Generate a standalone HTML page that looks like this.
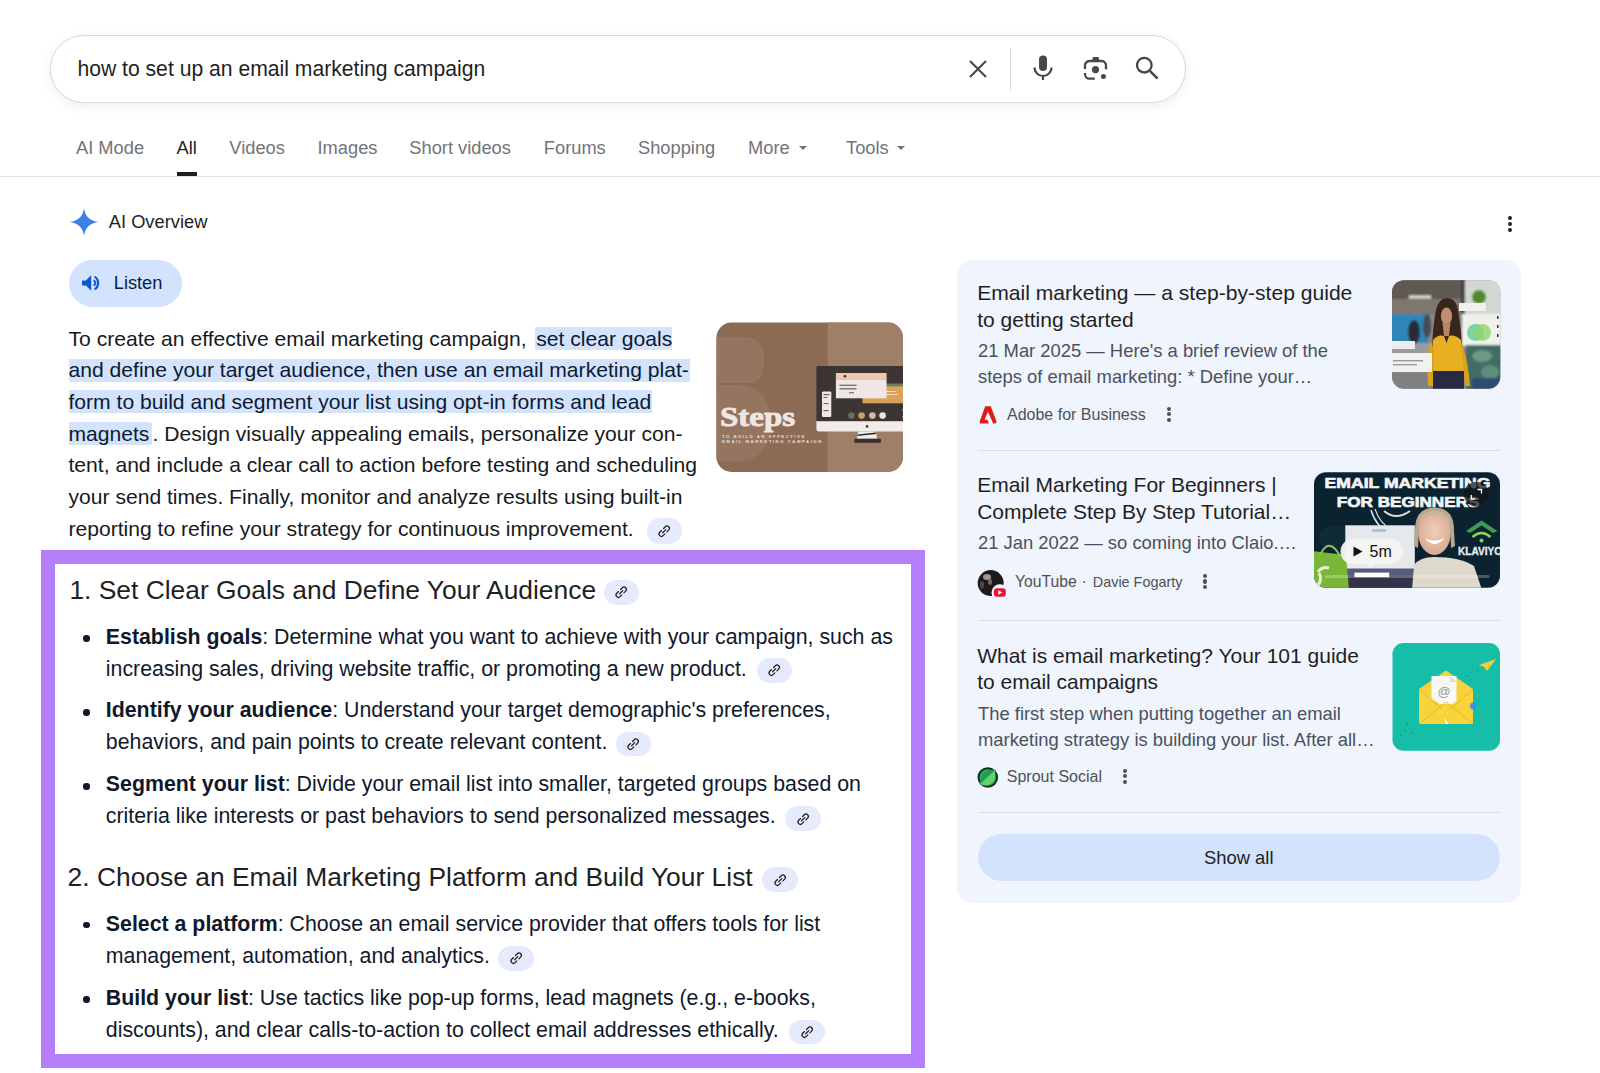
<!DOCTYPE html>
<html><head><meta charset="utf-8"><title>Search</title>
<style>
html,body{margin:0;padding:0;background:#fff;width:1600px;height:1073px;overflow:hidden;position:relative}
body{font-family:"Liberation Sans",sans-serif}
.t{position:absolute;white-space:nowrap;line-height:1;font-family:"Liberation Sans",sans-serif}
.t b{font-weight:700}
</style></head><body>
<div style="position:absolute;left:50px;top:35px;width:1136px;height:68px;box-sizing:border-box;border:1px solid #d9d9d9;border-radius:34px;background:#fff;box-shadow:0 3px 12px rgba(0,0,0,.075)"></div><svg style="position:absolute;left:966px;top:57px" width="24" height="24" viewBox="0 0 24 24"><path d="M4 4L20 20M20 4L4 20" stroke="#474747" stroke-width="2.1" fill="none"/></svg><div style="position:absolute;left:1009.5px;top:48px;width:1px;height:42px;background:#dadce0"></div><svg style="position:absolute;left:1030px;top:54px" width="26" height="28" viewBox="0 0 26 28"><rect x="9" y="1.5" width="8" height="15.5" rx="4" fill="#474747"/><path d="M4.5 13.5a8.5 8.5 0 0 0 17 0" stroke="#474747" stroke-width="2.2" fill="none"/><path d="M13 22v4" stroke="#474747" stroke-width="2.2"/></svg><svg style="position:absolute;left:1080px;top:54px" width="30" height="30" viewBox="0 0 30 30"><path d="M5 15V11.5A4.5 4.5 0 0 1 9.5 7H21.5A4.5 4.5 0 0 1 26 11.5V15.3" stroke="#474747" stroke-width="2.3" fill="none"/><path d="M5 19V20.2A4.5 4.5 0 0 0 9.5 24.7H14.8" stroke="#474747" stroke-width="2.3" fill="none"/><rect x="12.5" y="2.9" width="6.4" height="4.5" rx="1" fill="#474747"/><circle cx="15.5" cy="15.6" r="3.6" fill="#474747"/><circle cx="23.4" cy="22.5" r="2.5" fill="#474747"/></svg><svg style="position:absolute;left:1132px;top:53px" width="30" height="30" viewBox="0 0 30 30"><circle cx="12.3" cy="12.2" r="7.3" stroke="#474747" stroke-width="2.3" fill="none"/><path d="M17.8 17.8L25.6 25.6" stroke="#474747" stroke-width="2.5"/></svg><div style="position:absolute;left:799px;top:146px;width:0;height:0;border-left:4.5px solid transparent;border-right:4.5px solid transparent;border-top:4.5px solid #70757a"></div><div style="position:absolute;left:897px;top:146px;width:0;height:0;border-left:4.5px solid transparent;border-right:4.5px solid transparent;border-top:4.5px solid #70757a"></div><div style="position:absolute;left:176.5px;top:172px;width:20.5px;height:3.5px;background:#1f1f1f"></div><div style="position:absolute;left:0;top:175.5px;width:1600px;height:1.2px;background:#e3e3e3"></div><svg style="position:absolute;left:69px;top:207px" width="30" height="30" viewBox="0 0 30 30"><path d="M15 1Q16.5 13.5 29.5 15Q16.5 16.5 15 29Q13.5 16.5 0.5 15Q13.5 13.5 15 1Z" fill="#3f7fe8"/></svg><div style="position:absolute;left:1507.5px;top:215.6px;width:4.2px;height:4.2px;border-radius:50%;background:#1f1f1f"></div><div style="position:absolute;left:1507.5px;top:221.6px;width:4.2px;height:4.2px;border-radius:50%;background:#1f1f1f"></div><div style="position:absolute;left:1507.5px;top:227.5px;width:4.2px;height:4.2px;border-radius:50%;background:#1f1f1f"></div><div style="position:absolute;left:69px;top:260px;width:112.5px;height:46.5px;border-radius:24px;background:#d3e3fd"></div><svg style="position:absolute;left:81px;top:272px" width="22" height="22" viewBox="0 0 22 22"><path d="M1 8.5H4.8L10.2 3.2V18.8L4.8 13.5H1Z" fill="#0b57d0"/><path d="M13.6 4.6a7.6 7.6 0 0 1 0 12.8" stroke="#0b57d0" stroke-width="2.3" fill="none"/><path d="M12.6 8.3a3 3 0 0 1 0 5.4" stroke="#0b57d0" stroke-width="2" fill="none"/></svg><div style="position:absolute;left:534.7px;top:327.1px;width:137.5px;height:23px;background:#d3e3fd;border-radius:2px 0 0 0"></div><div style="position:absolute;left:69px;top:358.75px;width:621.2px;height:23px;background:#d3e3fd;border-radius:0"></div><div style="position:absolute;left:69px;top:390.4px;width:583.3px;height:23px;background:#d3e3fd;border-radius:0"></div><div style="position:absolute;left:69px;top:422.05px;width:82.6px;height:23px;background:#d3e3fd;border-radius:0 2.5px 2.5px 0"></div><div style="position:absolute;left:646.5px;top:518.2px;width:35.7px;height:25.5px;border-radius:12.5px;background:#e5eafc"><svg width="16.4" height="16.4" viewBox="0 0 18 18" style="position:absolute;left:50%;top:50%;margin:-8.2px 0 0 -8.2px"><g transform="rotate(-45 9 9)" stroke="#1f1f1f" stroke-width="1.35" fill="none" stroke-linecap="round"><path d="M7.4 6.4H4.7A2.6 2.6 0 0 0 4.7 11.6H7.4"/><path d="M10.6 6.4H13.3A2.6 2.6 0 0 1 13.3 11.6H10.6"/><path d="M6.6 9H11.4"/></g></svg></div><div style="position:absolute;left:41px;top:550px;width:883.5px;height:517.5px;box-sizing:border-box;border:14.5px solid #b57ffc;background:#fff"></div><div style="position:absolute;left:603.8px;top:580px;width:35.3px;height:24.5px;border-radius:12.5px;background:#e5eafc"><svg width="16.4" height="16.4" viewBox="0 0 18 18" style="position:absolute;left:50%;top:50%;margin:-8.2px 0 0 -8.2px"><g transform="rotate(-45 9 9)" stroke="#1f1f1f" stroke-width="1.35" fill="none" stroke-linecap="round"><path d="M7.4 6.4H4.7A2.6 2.6 0 0 0 4.7 11.6H7.4"/><path d="M10.6 6.4H13.3A2.6 2.6 0 0 1 13.3 11.6H10.6"/><path d="M6.6 9H11.4"/></g></svg></div><div style="position:absolute;left:83.3px;top:635.4000000000001px;width:6.6px;height:6.6px;border-radius:50%;background:#10192b"></div><div style="position:absolute;left:756.9px;top:658px;width:35.3px;height:24.5px;border-radius:12.5px;background:#e5eafc"><svg width="16.4" height="16.4" viewBox="0 0 18 18" style="position:absolute;left:50%;top:50%;margin:-8.2px 0 0 -8.2px"><g transform="rotate(-45 9 9)" stroke="#1f1f1f" stroke-width="1.35" fill="none" stroke-linecap="round"><path d="M7.4 6.4H4.7A2.6 2.6 0 0 0 4.7 11.6H7.4"/><path d="M10.6 6.4H13.3A2.6 2.6 0 0 1 13.3 11.6H10.6"/><path d="M6.6 9H11.4"/></g></svg></div><div style="position:absolute;left:83.3px;top:709.1px;width:6.6px;height:6.6px;border-radius:50%;background:#10192b"></div><div style="position:absolute;left:615.5px;top:731.6px;width:35.5px;height:24.5px;border-radius:12.5px;background:#e5eafc"><svg width="16.4" height="16.4" viewBox="0 0 18 18" style="position:absolute;left:50%;top:50%;margin:-8.2px 0 0 -8.2px"><g transform="rotate(-45 9 9)" stroke="#1f1f1f" stroke-width="1.35" fill="none" stroke-linecap="round"><path d="M7.4 6.4H4.7A2.6 2.6 0 0 0 4.7 11.6H7.4"/><path d="M10.6 6.4H13.3A2.6 2.6 0 0 1 13.3 11.6H10.6"/><path d="M6.6 9H11.4"/></g></svg></div><div style="position:absolute;left:83.3px;top:783.2px;width:6.6px;height:6.6px;border-radius:50%;background:#10192b"></div><div style="position:absolute;left:785.4px;top:806.4px;width:35.8px;height:25px;border-radius:12.5px;background:#e5eafc"><svg width="16.4" height="16.4" viewBox="0 0 18 18" style="position:absolute;left:50%;top:50%;margin:-8.2px 0 0 -8.2px"><g transform="rotate(-45 9 9)" stroke="#1f1f1f" stroke-width="1.35" fill="none" stroke-linecap="round"><path d="M7.4 6.4H4.7A2.6 2.6 0 0 0 4.7 11.6H7.4"/><path d="M10.6 6.4H13.3A2.6 2.6 0 0 1 13.3 11.6H10.6"/><path d="M6.6 9H11.4"/></g></svg></div><div style="position:absolute;left:762.3px;top:867.4px;width:35.4px;height:24.6px;border-radius:12.5px;background:#e5eafc"><svg width="16.4" height="16.4" viewBox="0 0 18 18" style="position:absolute;left:50%;top:50%;margin:-8.2px 0 0 -8.2px"><g transform="rotate(-45 9 9)" stroke="#1f1f1f" stroke-width="1.35" fill="none" stroke-linecap="round"><path d="M7.4 6.4H4.7A2.6 2.6 0 0 0 4.7 11.6H7.4"/><path d="M10.6 6.4H13.3A2.6 2.6 0 0 1 13.3 11.6H10.6"/><path d="M6.6 9H11.4"/></g></svg></div><div style="position:absolute;left:83.3px;top:921.9000000000001px;width:6.6px;height:6.6px;border-radius:50%;background:#10192b"></div><div style="position:absolute;left:497.8px;top:946.3px;width:36px;height:24.5px;border-radius:12.5px;background:#e5eafc"><svg width="16.4" height="16.4" viewBox="0 0 18 18" style="position:absolute;left:50%;top:50%;margin:-8.2px 0 0 -8.2px"><g transform="rotate(-45 9 9)" stroke="#1f1f1f" stroke-width="1.35" fill="none" stroke-linecap="round"><path d="M7.4 6.4H4.7A2.6 2.6 0 0 0 4.7 11.6H7.4"/><path d="M10.6 6.4H13.3A2.6 2.6 0 0 1 13.3 11.6H10.6"/><path d="M6.6 9H11.4"/></g></svg></div><div style="position:absolute;left:83.3px;top:996.4000000000001px;width:6.6px;height:6.6px;border-radius:50%;background:#10192b"></div><div style="position:absolute;left:789.2px;top:1019.7px;width:35.5px;height:24.7px;border-radius:12.5px;background:#e5eafc"><svg width="16.4" height="16.4" viewBox="0 0 18 18" style="position:absolute;left:50%;top:50%;margin:-8.2px 0 0 -8.2px"><g transform="rotate(-45 9 9)" stroke="#1f1f1f" stroke-width="1.35" fill="none" stroke-linecap="round"><path d="M7.4 6.4H4.7A2.6 2.6 0 0 0 4.7 11.6H7.4"/><path d="M10.6 6.4H13.3A2.6 2.6 0 0 1 13.3 11.6H10.6"/><path d="M6.6 9H11.4"/></g></svg></div><div style="position:absolute;left:956.5px;top:260px;width:564.5px;height:642.5px;border-radius:16px;background:#f0f4fc"></div><div style="position:absolute;left:1166.8000000000002px;top:406.5px;width:4.2px;height:4.2px;border-radius:50%;background:#4d5156"></div><div style="position:absolute;left:1166.8000000000002px;top:412.0px;width:4.2px;height:4.2px;border-radius:50%;background:#4d5156"></div><div style="position:absolute;left:1166.8000000000002px;top:417.5px;width:4.2px;height:4.2px;border-radius:50%;background:#4d5156"></div><div style="position:absolute;left:978px;top:449.5px;width:522px;height:1.2px;background:#d9dee8"></div><div style="position:absolute;left:1203.2px;top:573.9px;width:4.2px;height:4.2px;border-radius:50%;background:#4d5156"></div><div style="position:absolute;left:1203.2px;top:579.4px;width:4.2px;height:4.2px;border-radius:50%;background:#4d5156"></div><div style="position:absolute;left:1203.2px;top:584.9px;width:4.2px;height:4.2px;border-radius:50%;background:#4d5156"></div><div style="position:absolute;left:978px;top:620px;width:522px;height:1.2px;background:#d9dee8"></div><div style="position:absolute;left:1122.6000000000001px;top:768.5px;width:4.2px;height:4.2px;border-radius:50%;background:#4d5156"></div><div style="position:absolute;left:1122.6000000000001px;top:774.0500000000001px;width:4.2px;height:4.2px;border-radius:50%;background:#4d5156"></div><div style="position:absolute;left:1122.6000000000001px;top:779.6px;width:4.2px;height:4.2px;border-radius:50%;background:#4d5156"></div><div style="position:absolute;left:978px;top:811.8px;width:522px;height:1.2px;background:#d9dee8"></div><div style="position:absolute;left:977.7px;top:834.3px;width:522.3px;height:47.2px;border-radius:24px;background:#d3e3fd"></div>
<svg style="position:absolute;left:0;top:0" width="1600" height="1073" viewBox="0 0 1600 1073">
<defs>
<clipPath id="cSteps"><rect x="716.5" y="322.5" width="186.5" height="149.5" rx="15"/></clipPath>
<clipPath id="cAdobe"><rect x="1392" y="280.2" width="108.3" height="108.5" rx="12"/></clipPath>
<clipPath id="cYt"><rect x="1314" y="472.2" width="186" height="115.5" rx="12"/></clipPath>
<clipPath id="cSp"><rect x="1392.5" y="643" width="107.5" height="107.8" rx="11"/></clipPath>
<clipPath id="cAv"><circle cx="990.7" cy="583.1" r="13"/></clipPath>
<filter id="blur1" x="-20%" y="-20%" width="140%" height="140%"><feGaussianBlur stdDeviation="1.2"/></filter>
<filter id="blur06"><feGaussianBlur stdDeviation="0.6"/></filter>
<radialGradient id="gFace" cx="50%" cy="45%" r="60%"><stop offset="0" stop-color="#f0cdb8"/><stop offset="1" stop-color="#d6a890"/></radialGradient>
</defs>

<!-- ===== Steps image ===== -->
<g clip-path="url(#cSteps)">
  <rect x="716" y="322" width="188" height="151" fill="#8c6b54"/>
  <rect x="827.7" y="322" width="76" height="151" fill="#a07f68"/>
  <g filter="url(#blur06)">
  <path d="M700 337 H744 Q764 337 764 361 Q764 385 744 385 H700Z" fill="#957460"/>
  <path d="M700 385 H738 Q770 385 770 423 Q770 461 738 461 H700Z" fill="#957460"/>
  <path d="M716 384 H752" stroke="#86654f" stroke-width="2" opacity="0.6"/>
  </g>
  <!-- monitor -->
  <rect x="816.4" y="365.9" width="90" height="55.5" rx="1.5" fill="#3b3534"/>
  <path d="M816.4 421.2 H906 V431.5 H819.5 A3 3 0 0 1 816.4 428.5Z" fill="#f2ece8"/>
  <circle cx="867.1" cy="426.4" r="1.3" fill="#3b3534"/>
  <path d="M858 431.5 H876 L877 438.8 H857Z" fill="#f2ece8"/>
  <path d="M857.5 434.5 L876 432.5 L876 434 L857.5 436Z" fill="#2c2624"/>
  <rect x="854.3" y="438.7" width="26.7" height="4.1" rx="1" fill="#3a302c"/>
  <rect x="822" y="391.5" width="9.3" height="25.6" rx="1" fill="#efe7e3"/>
  <rect x="823.5" y="394" width="6" height="1.2" fill="#6b6360"/><rect x="823.5" y="397" width="4" height="1" fill="#6b6360"/>
  <rect x="823.5" y="403" width="5" height="1" fill="#6b6360"/><rect x="823.5" y="410" width="5" height="1.2" fill="#6b6360"/>
  <rect x="862.5" y="383.5" width="42" height="3.5" fill="#6e7c62"/>
  <rect x="862.5" y="386.4" width="42" height="16.9" fill="#dca25a"/>
  <rect x="886" y="391" width="10" height="1" fill="#f3dcc0"/><rect x="886" y="394" width="12" height="1" fill="#f3dcc0"/>
  <rect x="835.9" y="373" width="50.7" height="6.5" fill="#f0c7ae"/>
  <rect x="835.9" y="379.3" width="50.7" height="19" fill="#efe7e5"/>
  <circle cx="845" cy="376.3" r="1.3" fill="#3b2a24"/>
  <rect x="839.5" y="384.7" width="17" height="1.1" fill="#5b5654"/>
  <rect x="839.5" y="388.3" width="17" height="1.1" fill="#5b5654"/>
  <rect x="849" y="392.3" width="5" height="1" fill="#5b5654"/>
  <circle cx="851.4" cy="415.6" r="3.3" fill="#6b6b5e"/>
  <circle cx="861.6" cy="415.6" r="3.3" fill="#c9a06b"/>
  <circle cx="872.4" cy="415.6" r="3.3" fill="#d8b99b"/>
  <circle cx="882.6" cy="415.6" r="3.3" fill="#efe7e3"/>
  <circle cx="904" cy="410" r="1.5" fill="#ffffff"/><circle cx="904" cy="417" r="1.5" fill="#ffffff"/>
  <!-- Steps text -->
  <text x="720" y="426" font-family="Liberation Serif" font-weight="700" font-size="27.5" fill="#efe6e1" stroke="#efe6e1" stroke-width="0.9" textLength="75" lengthAdjust="spacingAndGlyphs">Steps</text>
  <text x="722" y="438.2" font-family="Liberation Sans" font-weight="700" font-size="4.3" fill="#e9ddd6" letter-spacing="1.5">TO BUILD AN EFFECTIVE</text>
  <text x="722" y="443.2" font-family="Liberation Sans" font-weight="700" font-size="4.3" fill="#e9ddd6" letter-spacing="1.5">EMAIL MARKETING CAMPAIGN</text>
</g>

<!-- ===== Adobe thumbnail ===== -->
<g clip-path="url(#cAdobe)">
  <rect x="1390" y="278" width="112" height="112" fill="#8c8884"/>
  <g filter="url(#blur1)">
  <rect x="1390" y="278" width="75" height="22" fill="#5f5852"/>
  <rect x="1390" y="299" width="75" height="16" fill="#7d7770"/>
  <rect x="1409" y="295.5" width="22" height="3" fill="#e2ddd4"/>
  <rect x="1465" y="278" width="37" height="36" fill="#d3d7d2"/>
  <rect x="1461" y="278" width="4" height="36" fill="#45433f"/>
  <rect x="1390" y="314" width="38" height="30" fill="#2d87b8"/>
  <rect x="1390" y="343" width="45" height="47" fill="#9b9b9c"/>
  <rect x="1390" y="372" width="45" height="18" fill="#7f8083"/>
  <ellipse cx="1414" cy="332" rx="6" ry="12" fill="#2a2c36"/>
  <ellipse cx="1427" cy="326" rx="4" ry="12" fill="#474a55"/>
  <rect x="1462" y="314" width="40" height="32" fill="#eef1ec"/>
  <rect x="1466" y="345" width="36" height="45" fill="#3f6c63"/>
  <ellipse cx="1482" cy="356" rx="10" ry="6" fill="#6d9a86"/>
  <ellipse cx="1490" cy="372" rx="9" ry="7" fill="#5f8e7c"/>
  <rect x="1472" y="378" width="30" height="12" fill="#2e4c73"/>
  <circle cx="1479" cy="297" r="7" fill="#4f8a2a"/>
  </g>
  <g filter="url(#blur06)">
  <circle cx="1475.5" cy="332.5" r="8.5" fill="#6ecf9c" opacity="0.9"/>
  <circle cx="1482.5" cy="332.5" r="8.5" fill="#8ed46a" opacity="0.8"/>
  <rect x="1459" y="303" width="27" height="8" fill="#f0f0ec"/>
  <!-- woman -->
  <path d="M1436 310 Q1439 298 1447 298 Q1456 298 1458 310 Q1461 326 1462 348 L1432 348 Q1433 324 1436 310Z" fill="#37261d"/>
  <ellipse cx="1446.5" cy="316" rx="5.6" ry="8.5" fill="#c18f72"/>
  <path d="M1442.5 323 L1450.5 323 L1449 336 L1444 336Z" fill="#b98468"/>
  <path d="M1433 340 Q1438 334 1444 336 L1446.5 343 L1449 336 Q1455 334 1461 340 L1465 372 L1430 372Z" fill="#e6b022"/>
  <path d="M1430 342 Q1426 358 1428 386 L1433 386 L1434 350Z" fill="#d9a21c"/>
  <path d="M1461 342 Q1468 358 1470 386 L1465 386 L1462 352Z" fill="#d9a21c"/>
  <rect x="1433" y="371" width="31" height="19" fill="#252a44"/>
  <rect x="1390" y="353" width="42" height="19" fill="#f1f1ef"/>
  <rect x="1390" y="341" width="25" height="8" fill="#eeeeec"/>
  <rect x="1393" y="360" width="30" height="1.4" fill="#9a9a9a"/><rect x="1393" y="364" width="24" height="1.4" fill="#9a9a9a"/>
  <rect x="1497" y="316" width="1.5" height="3" fill="#333"/><rect x="1497" y="325" width="1.5" height="3" fill="#333"/><rect x="1497" y="334" width="1.5" height="3" fill="#333"/>
  </g>
</g>

<!-- ===== YouTube thumbnail ===== -->
<g clip-path="url(#cYt)">
  <rect x="1312" y="470" width="190" height="120" fill="#0b2330"/>
  <g filter="url(#blur06)">
  <ellipse cx="1336" cy="538" rx="18" ry="12" fill="#122c36" opacity="0.7"/>
  <path d="M1371 510 Q1376 527 1390 533" stroke="#cfe6ea" stroke-width="1.5" fill="none"/>
  <path d="M1375 509 Q1380 524 1392 530" stroke="#cfe6ea" stroke-width="1.1" fill="none"/>
  <path d="M1384 511 Q1396 521 1410 511" stroke="#e5d3dc" stroke-width="2" fill="none"/>
  <!-- laptop -->
  <rect x="1345.3" y="525.3" width="69.5" height="44" fill="#e6e9ec"/>
  <rect x="1372" y="529" width="14" height="3" fill="#a9c3dc"/>
  <rect x="1338" y="568.5" width="94" height="7" fill="#585b7c"/>
  <rect x="1345" y="575.5" width="88" height="13" fill="#30334a"/>
  <!-- shopify bag -->
  <path d="M1312 551 L1346 555 L1349 590 L1312 590Z" fill="#7ab737"/>
  <path d="M1320 555 Q1329 536 1340 556" stroke="#8cc655" stroke-width="2" fill="none"/>
  <path d="M1318 572 Q1322 566 1329 568 M1319 573 Q1323 580 1317 586" stroke="#e6f0da" stroke-width="3" fill="none"/>
  <!-- man -->
  <path d="M1412 590 L1414 565 Q1420 557 1434 557 Q1460 557 1474 566 L1482 590Z" fill="#ded9cd"/>
  <path d="M1415 532 Q1414 508 1434.5 507.5 Q1455 508 1454 532 L1455 546 L1451 548 L1450 528 L1419 528 L1418 548 L1414 546Z" fill="#b9a78c"/>
  <ellipse cx="1434.5" cy="533" rx="16.2" ry="22" fill="url(#gFace)"/>
  <path d="M1419 523 Q1421 511 1434.5 511 Q1448 511 1450 523 Q1443 515 1434.5 515 Q1426 515 1419 523Z" fill="#c9b597"/>
  <path d="M1424.5 538 Q1434.5 550 1444.5 538 Q1434.5 543 1424.5 538Z" fill="#ffffff"/>
  <!-- klaviyo -->
  <path d="M1466 531 L1481.5 520.5 L1497.5 531 L1493 533 L1481.5 525.5 L1470 533Z" fill="#3f9a52"/>
  <path d="M1472.5 537 Q1481.5 529 1490.5 537" stroke="#8ccf5c" stroke-width="2.6" fill="none"/>
  <circle cx="1481.5" cy="540.5" r="2" fill="#8ccf5c"/>
  </g>
  <text x="1458" y="554.5" font-family="Liberation Sans" font-weight="700" font-size="10" fill="#e8eef0" textLength="44" lengthAdjust="spacingAndGlyphs" stroke="#e8eef0" stroke-width="0.3">KLAVIYO</text>
  <text x="1324.6" y="487.6" font-family="Liberation Sans" font-weight="700" font-size="14.8" fill="#f2f4f4" textLength="165.8" lengthAdjust="spacingAndGlyphs" stroke="#f2f4f4" stroke-width="0.7">EMAIL MARKETING</text>
  <text x="1336.8" y="507" font-family="Liberation Sans" font-weight="700" font-size="14.5" fill="#f2f4f4" textLength="142.6" lengthAdjust="spacingAndGlyphs" stroke="#f2f4f4" stroke-width="0.7">FOR BEGINNERS</text>
  <circle cx="1476.4" cy="494.2" r="12.5" fill="#121518" opacity="0.72"/>
  <path d="M1477.5 489.5 H1481.5 V493.5 M1475.3 499 H1471.3 V495" stroke="#ffffff" stroke-width="1.3" fill="none"/>
  <!-- 5m pill -->
  <rect x="1340.5" y="538.7" width="62.1" height="25.6" rx="12.8" fill="#f5f5f3" opacity="0.96"/>
  <path d="M1366 563 L1370.5 568.5 L1375 563Z" fill="#f5f5f3" opacity="0.96"/>
  <path d="M1353.5 546.5 L1362.5 551.5 L1353.5 556.5Z" fill="#111"/>
  <text x="1369.5" y="557" font-family="Liberation Sans" font-size="16" fill="#111">5m</text>
  <rect x="1324.6" y="575" width="165" height="3" rx="1.5" fill="#ffffff" opacity="0.25"/>
  <rect x="1354.5" y="572.6" width="34.7" height="4.6" fill="#ffffff"/>
</g>

<!-- ===== Sprout thumbnail ===== -->
<g clip-path="url(#cSp)">
  <rect x="1390" y="640" width="112" height="114" fill="#16bea7"/>
  <g fill="#0f9c88">
    <circle cx="1467" cy="676" r="0.9"/><circle cx="1472" cy="672" r="0.9"/><circle cx="1478" cy="670" r="0.9"/><circle cx="1483" cy="666" r="0.9"/><circle cx="1470" cy="680" r="0.9"/>
    <circle cx="1407" cy="724" r="0.9"/><circle cx="1401" cy="735" r="0.9"/><circle cx="1412" cy="733" r="0.9"/><circle cx="1405" cy="730" r="0.8"/>
  </g>
  <path d="M1479 665 L1496 659 L1487 671 L1484 667Z" fill="#f5cf3a"/>
  <!-- envelope -->
  <path d="M1419 689 L1446 670.5 L1473 689 V724 H1419Z" fill="#f7d23c"/>
  <rect x="1431.5" y="676" width="25" height="28" fill="#f7f7f7"/>
  <path d="M1450 676 L1456.5 682 H1450Z" fill="#dcdcdc"/>
  <text x="1437.5" y="696" font-family="Liberation Sans" font-size="13" fill="#9b9b9b">@</text>
  <path d="M1419 690 L1446 708 L1473 690 V724 H1419Z" fill="#f8d33a"/>
  <path d="M1419 724 L1446 702 L1473 724 M1419 690 L1442 709 M1473 690 L1450 709" stroke="#e2b62a" stroke-width="0.9" fill="none"/>
  <circle cx="1473.5" cy="706" r="3.4" fill="#3d8fe0"/>
  <path d="M1438 716 l1.2 -3 M1443 714 l0 -3 M1448 715 l-1 -3" stroke="#f1e08a" stroke-width="0.7"/>
  <path d="M1444 718 L1449 724 L1446 724 L1447 727Z" fill="#ffffff"/>
</g>

<!-- ===== source icons ===== -->
<path d="M985.2 406.3 H990.8 L996.3 421 Q996.8 423.6 994.3 423.6 H993.2 L987.9 411.8 L984.6 419.8 H987.4 L988.9 423.6 H981.5 Q979.1 423.6 979.8 421.3 Z" fill="#dd1d17"/>
<g clip-path="url(#cAv)">
  <rect x="976" y="568" width="30" height="30" fill="#1d1918"/>
  <g filter="url(#blur06)">
  <ellipse cx="987" cy="577" rx="4" ry="3" fill="#c9b5ac" opacity="0.8"/>
  <ellipse cx="990" cy="582" rx="2" ry="3" fill="#8f7a78" opacity="0.8"/>
  <ellipse cx="982" cy="585" rx="2" ry="4" fill="#7a6060" opacity="0.6"/>
  </g>
</g>
<circle cx="999.8" cy="592.5" r="8.3" fill="#f0f4fc"/>
<rect x="993.9" y="588.2" width="11.9" height="8.6" rx="3" fill="#e8123a"/>
<path d="M998.3 590.3 L1002.3 592.5 L998.3 594.7Z" fill="#ffffff"/>
<circle cx="987.8" cy="777.5" r="10.3" fill="#13301f"/>
<circle cx="987.8" cy="777.5" r="8.2" fill="#2bb45e"/>
<path d="M980 784 L995 770 Q997 782 987 785.5 Q983 786 980 784Z" fill="#64d16e"/>
<path d="M980 784 L995 770 Q980 768 980 784Z" fill="#1f9e50"/>
</svg>

<div class="t" style="left:77.4px;top:57.60px;font-size:21.15px;color:#1f1f1f;font-weight:400;">how to set up an email marketing campaign</div><div class="t" style="left:76px;top:138.60px;font-size:18.3px;color:#70757a;font-weight:400;">AI Mode</div><div class="t" style="left:176.5px;top:138.60px;font-size:18.3px;color:#1f1f1f;font-weight:400;">All</div><div class="t" style="left:229.3px;top:138.60px;font-size:18.3px;color:#70757a;font-weight:400;">Videos</div><div class="t" style="left:317.5px;top:138.60px;font-size:18.3px;color:#70757a;font-weight:400;">Images</div><div class="t" style="left:409.3px;top:138.60px;font-size:18.3px;color:#70757a;font-weight:400;">Short videos</div><div class="t" style="left:543.8px;top:138.60px;font-size:18.3px;color:#70757a;font-weight:400;">Forums</div><div class="t" style="left:638px;top:138.60px;font-size:18.3px;color:#70757a;font-weight:400;">Shopping</div><div class="t" style="left:748px;top:138.60px;font-size:18.3px;color:#70757a;font-weight:400;">More</div><div class="t" style="left:846px;top:138.60px;font-size:18.3px;color:#70757a;font-weight:400;">Tools</div><div class="t" style="left:108.8px;top:212.80px;font-size:18.3px;color:#1f1f1f;font-weight:400;">AI Overview</div><div class="t" style="left:113.8px;top:273.60px;font-size:18.2px;color:#041e49;font-weight:400;">Listen</div><div class="t" style="left:68.5px;top:327.60px;font-size:21.1px;color:#161a22;font-weight:400;">To create an effective email marketing campaign,</div><div class="t" style="left:536.2px;top:327.60px;font-size:21.1px;color:#0b1a30;font-weight:400;">set clear goals</div><div class="t" style="left:68.5px;top:359.25px;font-size:21.1px;color:#0b1a30;font-weight:400;">and define your target audience, then use an email marketing plat-</div><div class="t" style="left:68.5px;top:390.90px;font-size:21.1px;color:#0b1a30;font-weight:400;">form to build and segment your list using opt-in forms and lead</div><div class="t" style="left:68.5px;top:422.55px;font-size:21.1px;color:#0b1a30;font-weight:400;">magnets</div><div class="t" style="left:152.5px;top:422.55px;font-size:21.1px;color:#161a22;font-weight:400;">. Design visually appealing emails, personalize your con-</div><div class="t" style="left:68.5px;top:454.20px;font-size:21.1px;color:#161a22;font-weight:400;">tent, and include a clear call to action before testing and scheduling</div><div class="t" style="left:68.5px;top:485.85px;font-size:21.1px;color:#161a22;font-weight:400;">your send times. Finally, monitor and analyze results using built-in</div><div class="t" style="left:68.5px;top:517.50px;font-size:21.1px;color:#161a22;font-weight:400;">reporting to refine your strategy for continuous improvement.</div><div class="t" style="left:69.4px;top:576.60px;font-size:26.4px;color:#1f1f1f;font-weight:400;">1. Set Clear Goals and Define Your Audience</div><div class="t" style="left:105.8px;top:627.20px;font-size:21.33px;color:#10192b;font-weight:400;"><b>Establish goals</b>: Determine what you want to achieve with your campaign, such as</div><div class="t" style="left:105.8px;top:658.70px;font-size:21.33px;color:#10192b;font-weight:400;">increasing sales, driving website traffic, or promoting a new product.</div><div class="t" style="left:105.8px;top:700.30px;font-size:21.33px;color:#10192b;font-weight:400;"><b>Identify your audience</b>: Understand your target demographic's preferences,</div><div class="t" style="left:105.8px;top:732.40px;font-size:21.33px;color:#10192b;font-weight:400;">behaviors, and pain points to create relevant content.</div><div class="t" style="left:105.8px;top:774.00px;font-size:21.33px;color:#10192b;font-weight:400;"><b>Segment your list</b>: Divide your email list into smaller, targeted groups based on</div><div class="t" style="left:105.8px;top:805.90px;font-size:21.33px;color:#10192b;font-weight:400;">criteria like interests or past behaviors to send personalized messages.</div><div class="t" style="left:67.6px;top:864.40px;font-size:26.4px;color:#1f1f1f;font-weight:400;">2. Choose an Email Marketing Platform and Build Your List</div><div class="t" style="left:105.8px;top:913.60px;font-size:21.33px;color:#10192b;font-weight:400;"><b>Select a platform</b>: Choose an email service provider that offers tools for list</div><div class="t" style="left:105.8px;top:946.20px;font-size:21.33px;color:#10192b;font-weight:400;">management, automation, and analytics.</div><div class="t" style="left:105.8px;top:988.40px;font-size:21.33px;color:#10192b;font-weight:400;"><b>Build your list</b>: Use tactics like pop-up forms, lead magnets (e.g., e-books,</div><div class="t" style="left:105.8px;top:1019.80px;font-size:21.33px;color:#10192b;font-weight:400;">discounts), and clear calls-to-action to collect email addresses ethically.</div><div class="t" style="left:977.2px;top:282.30px;font-size:21.1px;color:#1f1f1f;font-weight:400;">Email marketing — a step-by-step guide</div><div class="t" style="left:977.2px;top:308.70px;font-size:21px;color:#1f1f1f;font-weight:400;">to getting started</div><div class="t" style="left:978px;top:342.00px;font-size:18.4px;color:#4a5160;font-weight:400;">21 Mar 2025 — Here's a brief review of the</div><div class="t" style="left:978px;top:368.10px;font-size:18.4px;color:#4a5160;font-weight:400;">steps of email marketing: * Define your…</div><div class="t" style="left:1007px;top:406.60px;font-size:16px;color:#4d5156;font-weight:400;">Adobe for Business</div><div class="t" style="left:977.2px;top:474.20px;font-size:21px;color:#1f1f1f;font-weight:400;">Email Marketing For Beginners |</div><div class="t" style="left:977.2px;top:500.80px;font-size:21px;color:#1f1f1f;font-weight:400;">Complete Step By Step Tutorial…</div><div class="t" style="left:978px;top:534.10px;font-size:18.4px;color:#4a5160;font-weight:400;">21 Jan 2022 — so coming into Claio.…</div><div class="t" style="left:1015.1px;top:574.40px;font-size:15.7px;color:#4d5156;font-weight:400;">YouTube</div><div class="t" style="left:1081.5px;top:574.40px;font-size:15.7px;color:#4d5156;font-weight:400;">·</div><div class="t" style="left:1092.8px;top:575.40px;font-size:14.4px;color:#4d5156;font-weight:400;">Davie Fogarty</div><div class="t" style="left:977.2px;top:644.90px;font-size:21px;color:#1f1f1f;font-weight:400;">What is email marketing? Your 101 guide</div><div class="t" style="left:977.2px;top:670.80px;font-size:21px;color:#1f1f1f;font-weight:400;">to email campaigns</div><div class="t" style="left:978px;top:704.80px;font-size:18.4px;color:#4a5160;font-weight:400;">The first step when putting together an email</div><div class="t" style="left:978px;top:730.70px;font-size:18.4px;color:#4a5160;font-weight:400;">marketing strategy is building your list. After all…</div><div class="t" style="left:1006.8px;top:769.10px;font-size:16px;color:#4d5156;font-weight:400;">Sprout Social</div><div class="t" style="left:1204px;top:848.80px;font-size:18.4px;color:#1f1f1f;font-weight:400;">Show all</div>
</body></html>
